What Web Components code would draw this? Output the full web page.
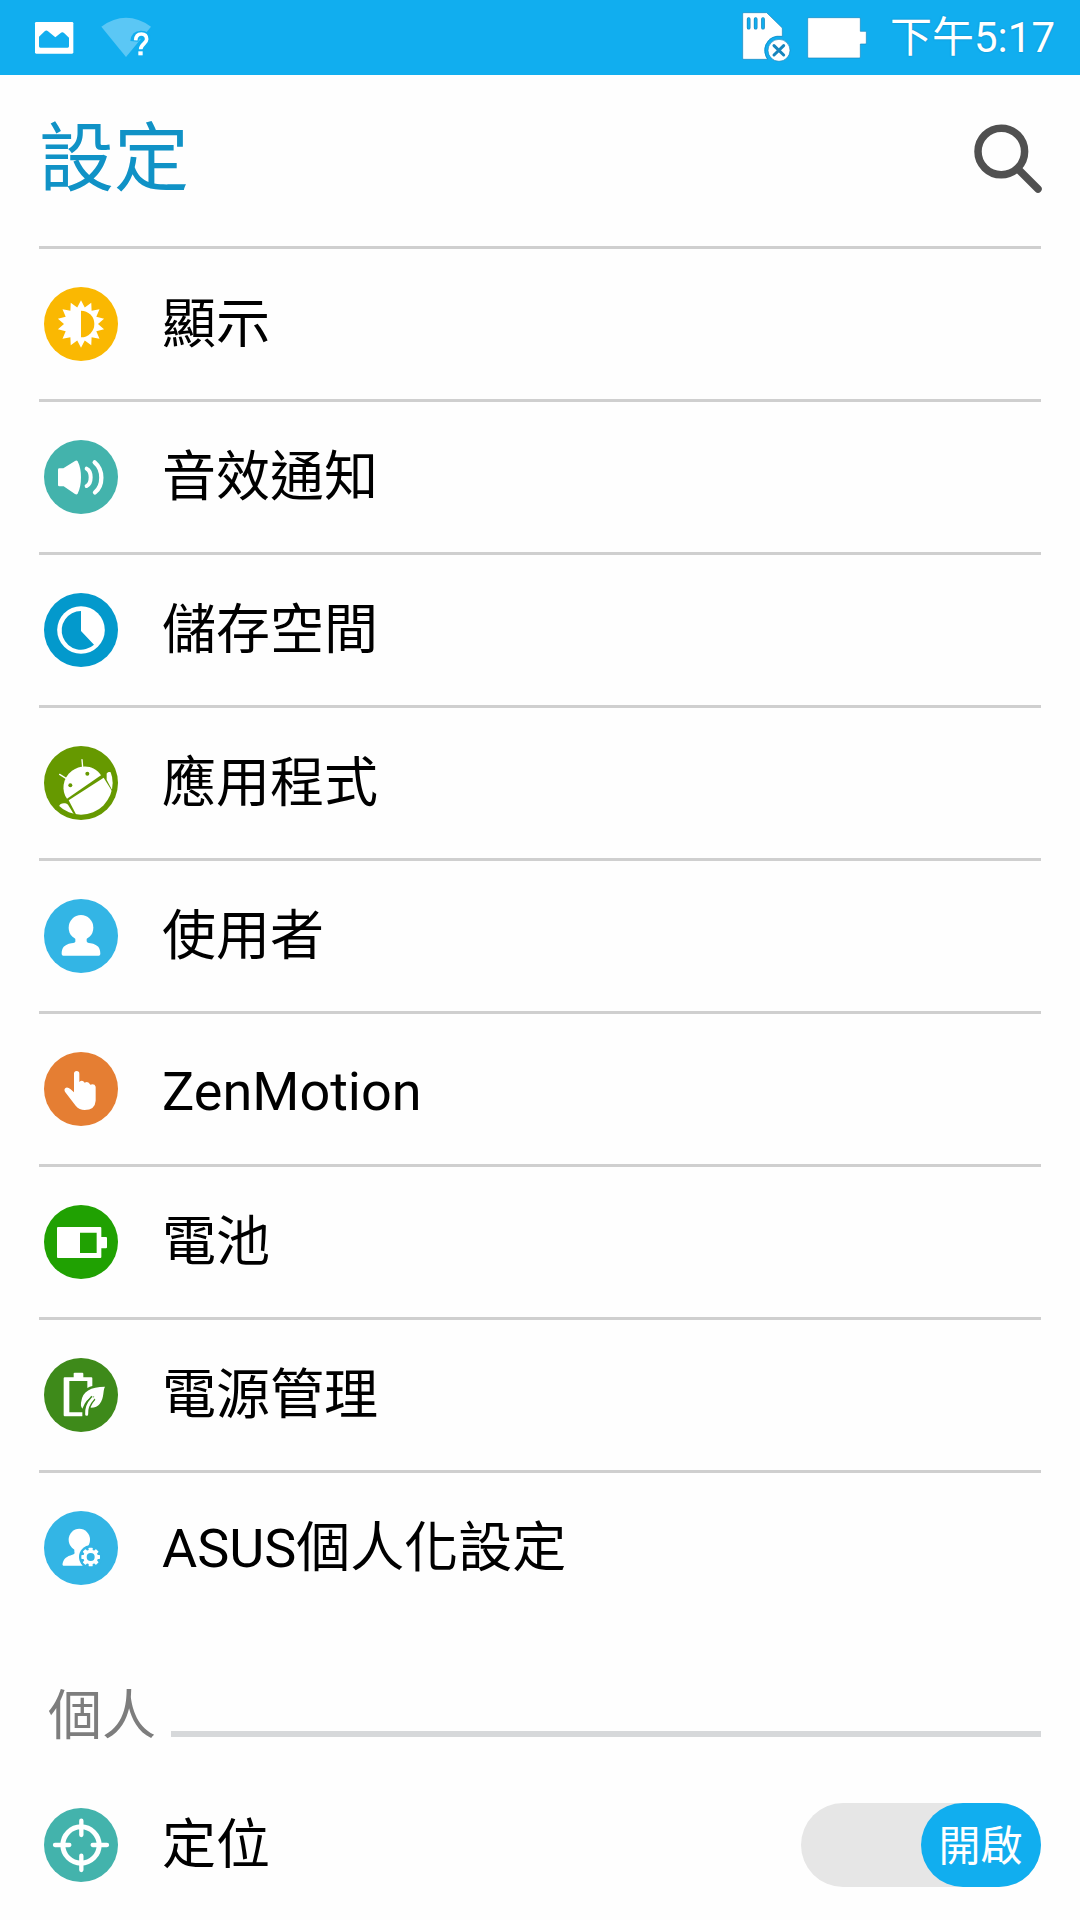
<!DOCTYPE html>
<html lang="zh-Hant">
<head>
<meta charset="utf-8">
<title>設定</title>
<style>
  body {
    margin: 0;
    width: 1080px;
    height: 1920px;
    overflow: hidden;
    background: #fefefe;
    color: #000;
    font-family: Roboto, 'Noto Sans CJK TC', sans-serif;
  }
</style>
</head>
<body>
<settings-screen>
  <status-bar slot="status">下午5:17</status-bar>
  <title-bar slot="title">設定</title-bar>
  <setting-row icon="display" color="#fab802">顯示</setting-row>
  <setting-row icon="sound" color="#43b3ac">音效通知</setting-row>
  <setting-row icon="storage" color="#0399cc">儲存空間</setting-row>
  <setting-row icon="apps" color="#669900">應用程式</setting-row>
  <setting-row icon="user" color="#33b5e5">使用者</setting-row>
  <setting-row icon="motion" color="#e57e33" latin>ZenMotion</setting-row>
  <setting-row icon="battery" color="#20a102">電池</setting-row>
  <setting-row icon="power" color="#3e8a1a">電源管理</setting-row>
  <setting-row icon="personal" color="#33b5e5">ASUS個人化設定</setting-row>
  <section-heading>個人</section-heading>
  <setting-row icon="location" color="#43b3ac" plain>定位<toggle-switch slot="end">開啟</toggle-switch></setting-row>
</settings-screen>

<script>
// n-pointed star, used for the sun
const star = (n, cx, cy, outer, inner) => {
  const points = [];
  for (let i = 0; i < n * 2; i++) {
    const r = i % 2 ? inner : outer;
    const a = (Math.PI * i) / n - Math.PI / 2;
    points.push(`${(cx + r * Math.cos(a)).toFixed(1)},${(cy + r * Math.sin(a)).toFixed(1)}`);
  }
  return points.join(' ');
};

const teeth = [0, 45, 90, 135, 180, 225, 270, 315]
  .map((a) => `<rect x="134" y="110" width="12" height="14" rx="2" transform="rotate(${a} 140 138)"/>`)
  .join('');

// white glyphs on a 222 x 222 disc, currentColor is the disc colour
const icons = {
  display: `
    <polygon points="${star(14, 111, 111, 71, 51)}"/>
    <path fill="currentColor" d="M111 71A40 40 0 0 1 111 151Z"/>`,
  sound: `
    <path d="M46 85H58L93 63Q98 60 101 64Q111 84 111 112Q111 141 101 161Q98 165 93 162L59 139H46Q42 139 42 135V89Q42 85 46 85Z"/>
    <path fill="none" stroke="#fff" stroke-width="12" stroke-linecap="round" d="M128 86Q140 92 140 112T128 138"/>
    <path fill="none" stroke="#fff" stroke-width="13" stroke-linecap="round" d="M152 67Q172 84 172 113T153 157"/>`,
  storage: `
    <circle cx="111" cy="111" r="71.500"/>
    <path fill="currentColor" d="M111 54A58 58 0 1 0 150 155L111 114Z"/>`,
  apps: `
    <clipPath id="disc"><circle cx="111" cy="111" r="95"/></clipPath>
    <path d="M69 158C52 136 54 96 84 74C112 54 152 57 171 88Z"/>
    <path stroke="#fff" stroke-width="4" stroke-linecap="round" d="M114 41L116 64M47 85L66 97"/>
    <g fill="currentColor"><circle cx="79" cy="118" r="6"/><circle cx="130" cy="83" r="6"/></g>
    <g clip-path="url(#disc)">
      <path d="M74 163L179 95L222 165L180 222H105Z"/>
      <path d="M45 182C46 171 64 169 72 176L94 212H50Z"/>
      <path d="M188 83C190 78 199 76 210 82L212 130H203L188 101Z"/>
    </g>`,
  user: `
    <ellipse cx="111" cy="86" rx="37" ry="38"/>
    <path d="M94 112H128V125Q127 131 140 133C162 137 169 147 169 165Q169 170 164 170H58Q53 170 53 165C53 147 60 137 82 133Q96 131 94 125Z"/>`,
  motion: `
    <path d="M90 65Q90 57 98 57T106 65V90Q115 82 122 92Q133 86 139 98Q152 94 155 104V146Q153 174 122 174Q106 174 95 161L64 121Q58 111 66 107Q72 105 79 111L90 121Z"/>`,
  battery: `
    <path fill-rule="evenodd" d="M42 66H169Q172 66 172 69V96H186Q189 96 189 99V127Q189 130 186 130H172V156Q172 159 169 159H42Q39 159 39 156V69Q39 66 42 66ZM108 83V144H158V83Z"/>`,
  power: `
    <path d="M89 46Q89 44 92 44H115Q118 44 118 47V58H142Q145 58 145 61V84Q137 86 130 90V69H76V163H115V175H62Q59 175 59 171V61Q59 58 62 58H89Z"/>
    <path d="M183 86C176 96 182 117 167 138Q159 149 141 149Q138 149 137 145Q139 130 151 115Q132 120 122 137L115 152Q108 144 112 130C115 101 140 86 183 86Z"/>
    <path fill="none" stroke="currentColor" stroke-width="17" d="M129 172Q125 143 148 119"/>
    <path fill="none" stroke="#fff" stroke-width="9" stroke-linecap="round" d="M128 169Q126 143 146 122"/>`,
  personal: `
    <ellipse cx="106" cy="86" rx="32" ry="33"/>
    <path d="M91 108H120V124L116 164H58Q54 164 56 156C60 142 68 136 85 131Q94 129 91 122Z"/>
    <circle fill="currentColor" cx="140" cy="138" r="35"/>
    <circle cx="140" cy="138" r="22"/>${teeth}
    <circle fill="currentColor" cx="140" cy="138" r="12"/>`,
  location: `
    <g fill="none" stroke="#fff">
      <circle cx="111" cy="111" r="54.500" stroke-width="15"/>
      <path stroke-width="13" stroke-linecap="round" d="M33 111H76M146 111H189M112 38V81M112 143V186"/>
    </g>`,
};

class BaseElement extends HTMLElement {
  connectedCallback() {
    this.attachShadow({ mode: 'open' });
    this.render();
  }
}

class SettingsScreen extends BaseElement {
  render() {
    this.shadowRoot.innerHTML = `
      <style>
        :host { display: flex; flex-direction: column; height: 1920px; }
        main { display: flex; flex-direction: column; padding: 0 39px; }
      </style>
      <slot name="status"></slot>
      <slot name="title"></slot>
      <main><slot></slot></main>`;
  }
}

class StatusBar extends BaseElement {
  render() {
    this.shadowRoot.innerHTML = `
      <style>
        :host {
          display: flex;
          box-sizing: border-box;
          height: 75px;
          padding: 0 25px 0 34px;
          background: #11aeef;
          color: #fff;
          font-size: 42px;
          line-height: 75px;
        }
        svg { display: block; height: 75px; flex: none; }
        .wifi { margin-left: 26px; }
        .sd { margin-left: auto; }
        .battery { margin-left: 16px; }
        .time { margin-left: 23px; white-space: nowrap; text-shadow: 0 0 2px #0d87c2; }
      </style>
      <svg width="40" viewBox="0 0 120 225">
        <rect x="3" y="66" width="115" height="95" rx="4" fill="#fff"/>
        <path fill="#11aeef" d="M15 110L32 94Q37 89 42 94L64 112L80 99Q85 94 91 100L105 113V139Q105 143 101 143H19Q15 143 15 139Z"/>
      </svg>
      <svg class="wifi" width="54" viewBox="300 0 162 225">
        <path fill="#5bc7f5" d="M304 80Q378 27 453 80L378 171Z"/>
        <path fill="none" stroke="#11aeef" stroke-width="24" d="M403 124Q405 104 423 104T440 119C440 133 422 132 422 166"/>
        <path fill="none" stroke="#fff" stroke-width="11" d="M407 121Q408 102 424 102T440 118C440 131 422 132 422 148"/>
        <rect x="415" y="154" width="13" height="12" fill="#fff"/>
      </svg>
      <svg class="sd" width="50" viewBox="63 0 150 225">
        <path fill="#fff" stroke="#1685bd" stroke-width="2" d="M71 38H140L187 84V110Q150 106 138 137Q132 158 143 178H71Q68 178 68 175V41Q68 38 71 38Z"/>
        <path stroke="#1685bd" stroke-width="11" stroke-linecap="round" d="M86 57V83M107 57V83M129 57V83"/>
        <path stroke="#11aeef" stroke-width="7" stroke-linecap="round" d="M86 57V83M107 57V83M129 57V83"/>
        <circle cx="176" cy="151" r="43" fill="#11aeef"/>
        <path fill="none" stroke="#1685bd" stroke-width="2" d="M187 109Q152 104 138 134Q130 158 143 178"/>
        <circle cx="177" cy="151" r="33" fill="#fff" stroke="#1685bd" stroke-width="2"/>
        <path stroke="#1685bd" stroke-width="9" stroke-linecap="round" d="M162 137L191 165M191 137L162 165"/>
      </svg>
      <svg class="battery" width="60" viewBox="261 0 180 225">
        <path fill="#fff" stroke="#1685bd" stroke-width="2" d="M266 53H418Q421 53 421 56V94H436Q439 94 439 97V129Q439 132 436 132H421V171Q421 174 418 174H266Q263 174 263 171V56Q263 53 266 53Z"/>
      </svg>
      <span class="time"><slot></slot></span>`;
  }
}

class TitleBar extends BaseElement {
  render() {
    this.shadowRoot.innerHTML = `
      <style>
        :host {
          display: flex;
          align-items: center;
          justify-content: space-between;
          height: 171px;
          padding: 0 36px 0 39px;
          color: #1092c6;
          font-size: 75px;
          line-height: 168px;
        }
        span { height: 171px; }
        svg { display: block; margin-bottom: 1px; }
      </style>
      <span><slot></slot></span>
      <svg width="72" height="72" viewBox="0 0 72 72" fill="none" stroke="#505050" stroke-width="7.500">
        <circle cx="29.300" cy="27.500" r="23.300"/>
        <path stroke-linecap="round" d="M47 46L66 65"/>
      </svg>`;
  }
}

class SettingRow extends BaseElement {
  render() {
    this.shadowRoot.innerHTML = `
      <style>
        :host {
          display: flex;
          align-items: center;
          box-sizing: border-box;
          height: 153px;
          padding-left: 5px;
          border-top: 3px solid #cfcfcf;
          font-size: 54px;
          line-height: 152px;
        }
        :host([plain]) { border-top: 0; height: 150px; }
        :host([latin]) { line-height: 156px; }
        svg { flex: none; width: 74px; height: 74px; color: ${this.getAttribute('color')}; }
        .label { flex: 1; margin-left: 44px; height: 150px; white-space: nowrap; }
      </style>
      <svg viewBox="0 0 222 222" fill="#fff">
        <circle cx="111" cy="111" r="111" fill="currentColor"/>
        ${icons[this.getAttribute('icon')]}
      </svg>
      <span class="label"><slot></slot></span>
      <slot name="end"></slot>`;
  }
}

class SectionHeading extends BaseElement {
  render() {
    this.shadowRoot.innerHTML = `
      <style>
        :host {
          display: flex;
          gap: 15px;
          height: 147px;
          padding-left: 9px;
          color: #7d7d7d;
          font-size: 54px;
          line-height: 188px;
        }
        i { flex: 1; height: 6px; margin-top: 108px; background: #d6d8da; }
      </style>
      <slot></slot><i></i>`;
  }
}

class ToggleSwitch extends BaseElement {
  render() {
    this.shadowRoot.innerHTML = `
      <style>
        :host {
          display: flex;
          justify-content: flex-end;
          width: 240px;
          height: 84px;
          border-radius: 42px;
          background: #e6e6e6;
          color: #fff;
          font-size: 42px;
          line-height: 88px;
        }
        span {
          box-sizing: border-box;
          width: 120px;
          height: 84px;
          padding-right: 1px;
          border-radius: 42px;
          background: #11aeef;
          text-align: center;
        }
      </style>
      <span><slot></slot></span>`;
  }
}

customElements.define('settings-screen', SettingsScreen);
customElements.define('status-bar', StatusBar);
customElements.define('title-bar', TitleBar);
customElements.define('setting-row', SettingRow);
customElements.define('section-heading', SectionHeading);
customElements.define('toggle-switch', ToggleSwitch);
</script>
</body>
</html>
